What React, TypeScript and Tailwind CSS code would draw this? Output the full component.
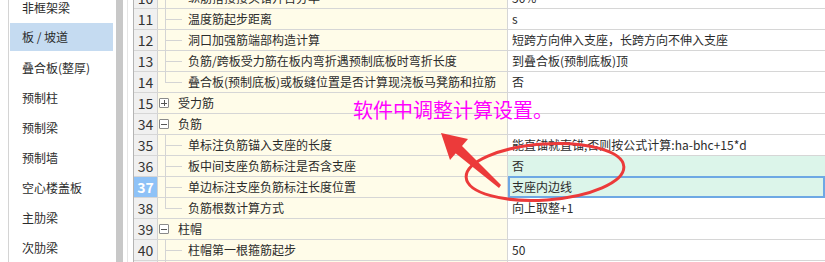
import React from "react";

type Row = {
  n: number;
  kind: "item" | "group";
  text: string;
  value?: string;
  last?: boolean;
  open?: boolean;
  hl?: boolean;
  sel?: boolean;
};

const rows: Row[] = [
  { n: 10, kind: "item", text: "纵筋搭接接头错开百分率", value: "50%" },
  { n: 11, kind: "item", text: "温度筋起步距离", value: "s" },
  { n: 12, kind: "item", text: "洞口加强筋端部构造计算", value: "短跨方向伸入支座，长跨方向不伸入支座" },
  { n: 13, kind: "item", text: "负筋/跨板受力筋在板内弯折遇预制底板时弯折长度", value: "到叠合板(预制底板)顶" },
  { n: 14, kind: "item", text: "叠合板(预制底板)或板缝位置是否计算现浇板马凳筋和拉筋", value: "否", last: true },
  { n: 15, kind: "group", text: "受力筋", open: false },
  { n: 34, kind: "group", text: "负筋", open: true },
  { n: 35, kind: "item", text: "单标注负筋锚入支座的长度", value: "能直锚就直锚,否则按公式计算:ha-bhc+15*d" },
  { n: 36, kind: "item", text: "板中间支座负筋标注是否含支座", value: "否", hl: true },
  { n: 37, kind: "item", text: "单边标注支座负筋标注长度位置", value: "支座内边线", hl: true, sel: true },
  { n: 38, kind: "item", text: "负筋根数计算方式", value: "向上取整+1", last: true },
  { n: 39, kind: "group", text: "柱帽", open: true },
  { n: 40, kind: "item", text: "柱帽第一根箍筋起步", value: "50" },
  { n: 41, kind: "item", text: "柱帽圆形箍筋的搭接长度", value: "max(lae,300)" },
];

const side = ["非框架梁", "板 / 坡道", "叠合板(整厚)", "预制柱", "预制梁", "预制墙", "空心楼盖板", "主肋梁", "次肋梁"];

function TableRow({ r }: { r: Row }) {
  return (
    <div className="flex h-[21px] shrink-0 border-b border-[#d6d6d6]">
      <div
        className={
          "w-[24px] shrink-0 border-r border-[#d2d2d2] flex items-center justify-center text-[14px] " +
          (r.sel ? "bg-[#8ec2f7] text-white font-bold" : "bg-[#f0f0f0] text-[#333]")
        }
      >
        {r.n}
      </div>
      <div className="w-[350px] shrink-0 relative bg-[#fffce9] border-r border-[#d6d6d6] flex items-center text-[12px] text-[#2b2b2b]">
        {r.kind === "item" ? (
          <>
            <div
              className={
                "absolute left-[7px] top-[-1px] w-px bg-[#d4d4d4] " + (r.last ? "h-[11px]" : "h-[22px]")
              }
            />
            <div className="absolute left-[7px] top-[10px] w-[17px] h-px bg-[#d4d4d4]" />
            <span className="ml-[30px] whitespace-nowrap">{r.text}</span>
          </>
        ) : (
          <>
            <div className="ml-[1px] w-[10px] h-[10px] rounded-[1px] border border-[#8a8a8a] bg-white flex items-center justify-center">
              <div className="relative w-[6px] h-[6px]">
                <div className="absolute left-0 top-[2.5px] w-[6px] h-px bg-[#555]" />
                {!r.open && <div className="absolute top-0 left-[2.5px] h-[6px] w-px bg-[#555]" />}
              </div>
            </div>
            <span className="ml-[9px] whitespace-nowrap">{r.text}</span>
          </>
        )}
      </div>
      <div
        className={
          "flex-1 flex items-center text-[12px] text-[#2b2b2b] whitespace-nowrap " +
          (r.sel
            ? "bg-[#dcf5ea] border-2 border-[#6ea8e4] mt-[-1px] mb-[-1px] pl-[2px]"
            : r.hl
            ? "bg-[#dcf5ea] pl-[4px]"
            : "bg-white pl-[4px]")
        }
      >
        {r.value ?? ""}
      </div>
    </div>
  );
}

export default function App() {
  return (
    <div className="relative w-[825px] h-[262px] overflow-hidden bg-white font-['Microsoft_YaHei','Noto_Sans_CJK_SC',sans-serif]">
      <div className="flex w-[825px] h-[262px]">
        <div className="w-[8px] shrink-0" />
        <div className="w-[108px] shrink-0 border-l border-[#d4d4d4] flex flex-col">
          <div className="mt-[-7px] flex flex-col">
            {side.map((s, i) =>
              i === 1 ? (
                <div
                  key={s}
                  className="h-[28px] mb-[2px] ml-[1px] mr-[3px] bg-[#c5dbf1] flex items-center pl-[12px] text-[12px] text-[#2b2b2b]"
                >
                  {s}
                </div>
              ) : (
                <div key={s} className="h-[30px] flex items-center pl-[13px] text-[12px] text-[#2b2b2b]">
                  {s}
                </div>
              )
            )}
          </div>
        </div>
        <div className="w-[7px] shrink-0 bg-[#c8c8c8]" />
        <div className="w-[4px] shrink-0" />
        <div className="w-px shrink-0 bg-[#e6e6e6]" />
        <div className="w-[5px] shrink-0" />
        <div className="flex-1 border-l border-[#b4b4b4] flex flex-col">
          <div className="mt-[-12px] flex flex-col">
            {rows.map((r) => (
              <TableRow key={r.n} r={r} />
            ))}
          </div>
        </div>
      </div>

      <div className="absolute left-[353px] top-[100px] text-[20px] leading-[20px] text-[#f0f] whitespace-nowrap">
        软件中调整计算设置。
      </div>

      <svg className="absolute left-0 top-0 pointer-events-none" width="825" height="262" viewBox="0 0 825 262">
        <ellipse
          cx="545"
          cy="172"
          rx="79"
          ry="28"
          transform="rotate(-4 545 172)"
          fill="none"
          stroke="#ec3a3a"
          strokeWidth="3"
        />
        <polygon points="441,133 468,139 450,160" fill="#ec3a3a" />
        <polygon points="454,152 461,145 501,185 499,188" fill="#ec3a3a" />
      </svg>
    </div>
  );
}
